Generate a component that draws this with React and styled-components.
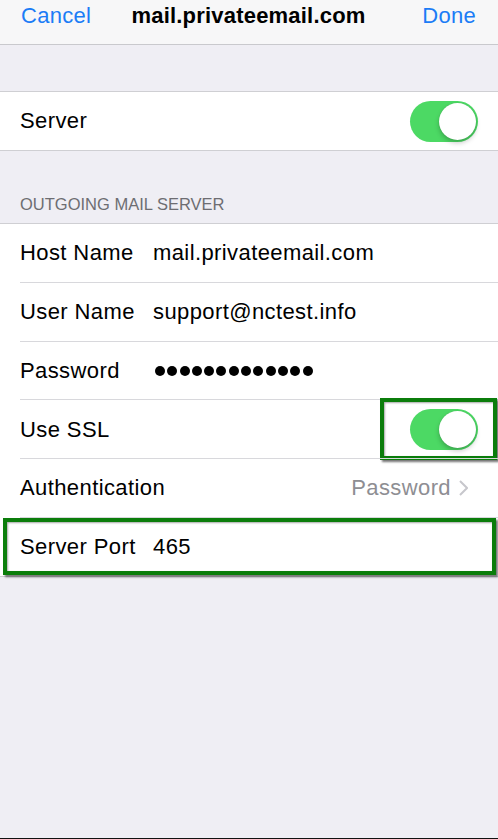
import React from 'react';
import styled, { createGlobalStyle } from 'styled-components';

const GlobalStyle = createGlobalStyle`
  html, body {
    margin: 0;
    padding: 0;
    background: #efeef4;
  }
  * {
    box-sizing: border-box;
  }
`;

const Screen = styled.div`
  width: 498px;
  height: 839px;
  background: #efeef4;
  font-family: "Liberation Sans", Arial, sans-serif;
  color: #000;
  border-bottom: 1px solid #111;
  overflow: hidden;
`;

const NavBar = styled.div`
  height: 45px;
  display: grid;
  grid-template-columns: 1fr auto 1fr;
  align-items: start;
  padding: 0 22px 0 21px;
  background: #f7f7f8;
  border-bottom: 1px solid #c9c9cd;
`;

const NavButton = styled.div`
  font-size: 22px;
  letter-spacing: 0.3px;
  line-height: 32px;
  color: #1b7cf6;
  justify-self: ${(p) => (p.right ? 'end' : 'start')};
`;

const NavTitle = styled.div`
  font-size: 22px;
  font-weight: bold;
  letter-spacing: 0.2px;
  line-height: 32px;
`;

const Spacer = styled.div`
  height: 46px;
`;

const Group = styled.div`
  background: #fff;
  border-top: 1px solid #cfcfd3;
  border-bottom: 1px solid #cfcfd3;
`;

const Row = styled.div`
  position: relative;
  height: ${(p) => (p.last ? '58px' : '58.75px')};
  display: flex;
  align-items: center;
  padding: 0 20px;
  font-size: 22px;
  letter-spacing: 0.4px;

  &:not(:last-child)::after {
    content: '';
    position: absolute;
    left: 20px;
    right: 0;
    bottom: 0;
    height: 1px;
    background: #d8d8dc;
  }
`;

const Label = styled.div`
  width: 133px;
  flex-shrink: 0;
  white-space: nowrap;
`;

const Value = styled.div`
  flex: 1;
  white-space: nowrap;
`;

const Detail = styled.div`
  margin-left: auto;
  margin-right: 10px;
  display: flex;
  align-items: center;
  gap: 8px;
  color: #8e8e93;
`;

const Dots = styled.div`
  display: flex;
  gap: 2.3px;
  margin-left: 2px;
`;

const Dot = styled.span`
  width: 10px;
  height: 10px;
  border-radius: 50%;
  background: #000;
`;

const Switch = styled.div`
  margin-left: auto;
  width: 68px;
  height: 41px;
  border-radius: 21px;
  background: #4cd964;
  display: flex;
  align-items: center;
  justify-content: flex-end;
  padding: 2px;
`;

const Knob = styled.span`
  width: 37px;
  height: 37px;
  border-radius: 50%;
  background: #fff;
  box-shadow: 0 3px 5px rgba(0, 0, 0, 0.22), 0 0 1px rgba(0, 0, 0, 0.2);
`;

const SectionHeader = styled.div`
  height: 72px;
  display: flex;
  align-items: flex-end;
  padding: 0 20px 9px;
  font-size: 16.5px;
  color: #6d6d72;
`;

const Highlight = styled.div`
  position: absolute;
  top: ${(p) => p.top}px;
  bottom: ${(p) => p.bottom}px;
  left: ${(p) => p.left}px;
  right: ${(p) => p.right}px;
  border: 4px solid #0b7d0b;
  box-shadow: 2px 2px 2px rgba(0, 0, 0, 0.55), inset 1px 1px 2px rgba(0, 0, 0, 0.35);
  pointer-events: none;
`;

function Chevron() {
  return (
    <svg width="9" height="16" viewBox="0 0 9 16" fill="none">
      <path d="M1 1l7 7-7 7" stroke="#c7c7cc" strokeWidth="2" />
    </svg>
  );
}

function Toggle() {
  return (
    <Switch>
      <Knob />
    </Switch>
  );
}

export default function App() {
  return (
    <Screen>
      <GlobalStyle />
      <NavBar>
        <NavButton>Cancel</NavButton>
        <NavTitle>mail.privateemail.com</NavTitle>
        <NavButton right>Done</NavButton>
      </NavBar>
      <Spacer />
      <Group>
        <Row last>
          <Label>Server</Label>
          <Toggle />
        </Row>
      </Group>
      <SectionHeader>OUTGOING MAIL SERVER</SectionHeader>
      <Group>
        <Row>
          <Label>Host Name</Label>
          <Value>mail.privateemail.com</Value>
        </Row>
        <Row>
          <Label>User Name</Label>
          <Value>support@nctest.info</Value>
        </Row>
        <Row>
          <Label>Password</Label>
          <Dots>
            {Array.from({ length: 13 }).map((_, i) => <Dot key={i} />)}
          </Dots>
        </Row>
        <Row>
          <Label>Use SSL</Label>
          <Toggle />
          <Highlight top={-2} bottom={-1} left={380} right={1} />
        </Row>
        <Row>
          <Label>Authentication</Label>
          <Detail>
            Password
            <Chevron />
          </Detail>
        </Row>
        <Row last>
          <Label>Server Port</Label>
          <Value>465</Value>
          <Highlight top={0} bottom={1} left={3} right={2} />
        </Row>
      </Group>
    </Screen>
  );
}
